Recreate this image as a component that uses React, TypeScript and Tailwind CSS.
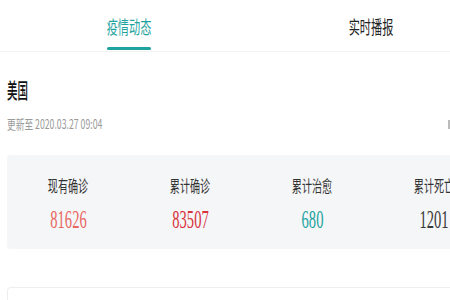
import React from 'react';

const STATS = [
  { label: '现有确诊', value: '81626', color: 'text-[#e8675f]' },
  { label: '累计确诊', value: '83507', color: 'text-[#d8323c]' },
  { label: '累计治愈', value: '680', color: 'text-[#1fa39e]' },
  { label: '累计死亡', value: '1201', color: 'text-[#3a3a3a]' },
];

const cjk = "font-['Noto_Sans_CJK_SC','Noto_Sans',sans-serif]";

export default function App() {
  return (
    <div className={`w-[450px] h-[300px] overflow-hidden bg-white ${cjk}`}>
      {/* Tabs */}
      <div className="h-[52px] flex pl-[8px] border-b border-[#f2f2f2]">
        <div className="w-[242px] shrink-0 flex flex-col items-center">
          <span className="mt-[13px] inline-block text-[18px] leading-[26px] text-[#1fa39e] scale-x-[0.62] origin-center whitespace-nowrap">
            疫情动态
          </span>
          <div className="mt-[8px] w-[44px] h-[3px] rounded-full bg-[#1fa39e]" />
        </div>
        <div className="w-[242px] shrink-0 flex flex-col items-center">
          <span className="mt-[13px] inline-block text-[18px] leading-[26px] text-[#222] scale-x-[0.62] origin-center whitespace-nowrap">
            实时播报
          </span>
        </div>
      </div>

      {/* Region header */}
      <div className="pl-[7px] pt-[24px]">
        <div className="w-[100px] text-[21px] leading-[26px] font-medium text-[#111] scale-x-[0.5] origin-left whitespace-nowrap">
          美国
        </div>
        <div className="mt-[13px] flex items-center justify-between">
          <span className="inline-block text-[13px] leading-[18px] text-[#9a9a9a] scale-x-[0.67] origin-left whitespace-nowrap">
            更新至 2020.03.27 09:04
          </span>
          <span className="w-[2px] h-[9px] bg-[#bbb]" />
        </div>
      </div>

      {/* Stats card */}
      <div className="ml-[7px] mt-[22px] w-[500px] h-[94px] rounded-[4px] bg-[#f5f6f8] flex">
        {STATS.map((s) => (
          <div key={s.label} className="w-[122px] shrink-0 flex flex-col items-center">
            <span className="mt-[18px] inline-block text-[16px] leading-[24px] text-[#333] scale-x-[0.63] origin-center whitespace-nowrap">
              {s.label}
            </span>
            <span
              className={`mt-[8px] inline-block font-['Liberation_Serif',serif] text-[26px] leading-[30px] ${s.color} scale-x-[0.56] origin-center whitespace-nowrap`}
            >
              {s.value}
            </span>
          </div>
        ))}
      </div>

      {/* Next card */}
      <div className="ml-[7px] mt-[38px] w-[500px] h-[40px] rounded-[4px] border-t border-l border-[#eeeeee] bg-white" />
    </div>
  );
}
